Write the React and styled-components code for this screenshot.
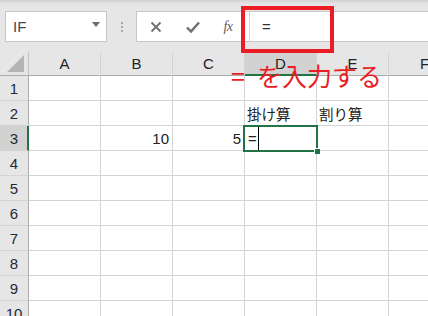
import React from "react";
import styled, { createGlobalStyle } from "styled-components";

const GlobalStyle = createGlobalStyle`
  html, body { margin: 0; padding: 0; background: #ffffff; }
  body { overflow: hidden; }
`;

const Page = styled.div`
  position: relative;
  width: 428px;
  height: 316px;
  overflow: hidden;
  background: #ffffff;
  font-family: "Noto Sans CJK JP", "Liberation Sans", sans-serif;
`;

const Toolbar = styled.div`
  height: 52px;
  box-sizing: border-box;
  display: flex;
  align-items: flex-start;
  padding: 11px 0 0 5px;
  background: linear-gradient(#cfcfcf 0px, #dedede 2px, #e6e6e6 5px, #e6e6e6 100%);
`;

const NameBox = styled.div`
  flex: 0 0 102px;
  height: 31px;
  box-sizing: border-box;
  background: #fff;
  border: 1px solid #c6c6c6;
  display: flex;
  align-items: center;
  justify-content: space-between;
  padding: 0 6px 0 7px;
`;

const NameText = styled.span`
  font-family: "Liberation Sans", sans-serif;
  font-size: 15px;
  color: #3a4a5a;
`;

const Caret = styled.span`
  width: 0;
  height: 0;
  border-left: 4px solid transparent;
  border-right: 4px solid transparent;
  border-top: 5px solid #6d6d6d;
  margin-top: -4px;
`;

const Grip = styled.div`
  flex: 0 0 2px;
  margin: 11px 13px 0 14px;
  display: flex;
  flex-direction: column;
  gap: 2px;
`;

const Dot = styled.span`
  width: 2px;
  height: 2px;
  background: #a6a6a6;
`;

const FormulaBox = styled.div`
  flex: 0 0 320px;
  height: 31px;
  box-sizing: border-box;
  background: #fff;
  border: 1px solid #c6c6c6;
  display: flex;
  align-items: stretch;
`;

const Buttons = styled.div`
  flex: 0 0 112px;
  display: flex;
  align-items: center;
`;

const IconBtn = styled.span`
  flex: 0 0 ${p => p.$w}px;
  display: flex;
  align-items: center;
  justify-content: center;
  color: #6e6e6e;
`;

const Fx = styled.span`
  font-family: "Liberation Serif", serif;
  font-style: italic;
  font-size: 14px;
  color: #5e5e5e;
  letter-spacing: -0.5px;
`;

const Input = styled.div`
  flex: 1;
  border-left: 1px solid #d0d0d0;
  display: flex;
  align-items: center;
  padding-left: 12px;
  font-family: "Liberation Sans", sans-serif;
  font-size: 15px;
  color: #333;
`;

const Grid = styled.div`
  display: grid;
  grid-template-columns: 29px repeat(6, 72px);
  grid-template-rows: 24px repeat(10, 25px);
`;

const Corner = styled.div`
  position: relative;
  background: #e6e6e6;
  border-right: 1px solid #c4c4c4;
  border-bottom: 1px solid #ababab;
  box-sizing: border-box;
  &::after {
    content: "";
    position: absolute;
    right: 4px;
    bottom: 3px;
    width: 0;
    height: 0;
    border-left: 17px solid transparent;
    border-bottom: 17px solid #b4b4b4;
  }
`;

const ColHead = styled.div`
  box-sizing: border-box;
  background: ${p => (p.$sel ? "#d2d2d2" : "#e6e6e6")};
  border-right: 1px solid #d4d4d4;
  border-bottom: ${p => (p.$sel ? "2px solid #217346" : "1px solid #ababab")};
  display: flex;
  align-items: center;
  justify-content: center;
  font-family: "Liberation Sans", sans-serif;
  font-size: 15px;
  color: #222;
  padding-top: ${p => (p.$sel ? "1px" : "0")};
`;

const RowHead = styled.div`
  box-sizing: border-box;
  background: ${p => (p.$sel ? "#d2d2d2" : "#e6e6e6")};
  border-right: ${p => (p.$sel ? "2px solid #217346" : "1px solid #ababab")};
  border-bottom: 1px solid #d4d4d4;
  display: flex;
  align-items: center;
  justify-content: center;
  font-family: "Liberation Sans", sans-serif;
  font-size: 15px;
  color: #1e2a3a;
  padding-left: ${p => (p.$sel ? "1px" : "0")};
`;

const Cell = styled.div`
  box-sizing: border-box;
  border-right: 1px solid #d4d4d4;
  border-bottom: 1px solid #d4d4d4;
  display: flex;
  align-items: center;
  justify-content: ${p => (p.$right ? "flex-end" : "flex-start")};
  padding: 0 3px 0 2px;
  font-family: "Noto Sans CJK JP", sans-serif;
  font-size: 14.5px;
  color: #222;
  white-space: nowrap;
`;

const NumText = styled.span`
  font-family: "Liberation Sans", sans-serif;
  font-size: 15px;
`;

const Selection = styled.div`
  position: absolute;
  left: 243px;
  top: 125px;
  width: 75px;
  height: 27px;
  box-sizing: border-box;
  border: 2px solid #217346;
  display: flex;
  align-items: center;
  padding-left: 3px;
  font-family: "Liberation Sans", sans-serif;
  font-size: 15px;
  color: #222;
  &::after {
    content: "";
    position: absolute;
    right: -4px;
    bottom: -4px;
    width: 5px;
    height: 5px;
    background: #217346;
    border-left: 1px solid #fff;
    border-top: 1px solid #fff;
  }
`;

const Cursor = styled.span`
  width: 1px;
  height: 23px;
  background: #000;
  margin-left: 1px;
`;

const RedBox = styled.div`
  position: absolute;
  left: 241px;
  top: 6px;
  width: 93px;
  height: 47px;
  box-sizing: border-box;
  border: 4px solid #ec1c24;
`;

const RedLabel = styled.div`
  position: absolute;
  left: 231px;
  top: 58px;
  font-family: "Noto Sans CJK JP", sans-serif;
  font-size: 25px;
  line-height: 34px;
  color: #ec1c24;
  white-space: nowrap;
`;

const Eq = styled.span`
  margin-right: 12px;
`;

const cols = ["A", "B", "C", "D", "E", "F"];
const rows = [1, 2, 3, 4, 5, 6, 7, 8, 9, 10];

const data = {
  "2-D": { text: "掛け算" },
  "2-E": { text: "割り算" },
  "3-B": { text: "10", num: true },
  "3-C": { text: "5", num: true },
};

export default function App() {
  return (
    <Page>
      <GlobalStyle />
      <Toolbar>
        <NameBox>
          <NameText>IF</NameText>
          <Caret />
        </NameBox>
        <Grip>
          <Dot />
          <Dot />
          <Dot />
        </Grip>
        <FormulaBox>
          <Buttons>
            <IconBtn $w={38}>
              <svg width="12" height="12" viewBox="0 0 12 12">
                <path d="M1.5 1.5 L10.5 10.5 M10.5 1.5 L1.5 10.5" stroke="#6e6e6e" strokeWidth="1.8" fill="none" />
              </svg>
            </IconBtn>
            <IconBtn $w={36}>
              <svg width="14" height="12" viewBox="0 0 14 12">
                <path d="M1 6.5 L5 10.5 L13 1.5" stroke="#6e6e6e" strokeWidth="2.4" fill="none" />
              </svg>
            </IconBtn>
            <IconBtn $w={34}>
              <Fx>fx</Fx>
            </IconBtn>
          </Buttons>
          <Input>=</Input>
        </FormulaBox>
      </Toolbar>
      <Grid>
        <Corner />
        {cols.map(c => (
          <ColHead key={c} $sel={c === "D"}>{c}</ColHead>
        ))}
        {rows.map(r => (
          <React.Fragment key={r}>
            <RowHead $sel={r === 3}>{r}</RowHead>
            {cols.map(c => {
              const d = data[`${r}-${c}`];
              return (
                <Cell key={c} $right={d && d.num}>
                  {d ? (d.num ? <NumText>{d.text}</NumText> : d.text) : null}
                </Cell>
              );
            })}
          </React.Fragment>
        ))}
      </Grid>
      <Selection>
        =<Cursor />
      </Selection>
      <RedBox />
      <RedLabel>
        <Eq>=</Eq>を入力する
      </RedLabel>
    </Page>
  );
}
